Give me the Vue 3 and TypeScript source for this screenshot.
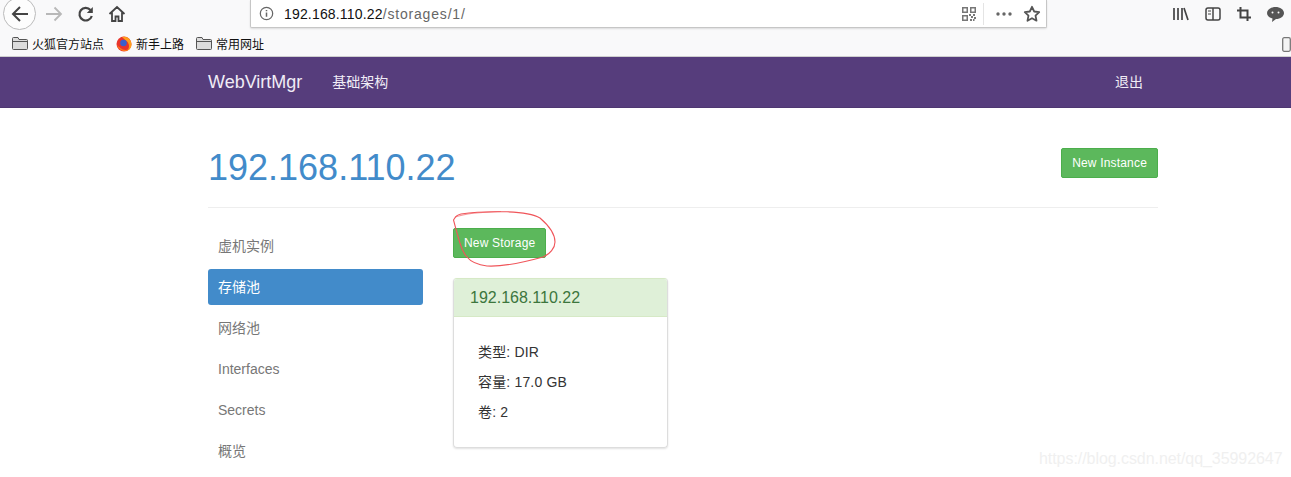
<script setup lang="ts">
const sideItems = [
  { label: "虚机实例", active: false },
  { label: "存储池", active: true },
  { label: "网络池", active: false },
  { label: "Interfaces", active: false },
  { label: "Secrets", active: false },
  { label: "概览", active: false },
];

const details = ["类型: DIR", "容量: 17.0 GB", "卷: 2"];
</script>

<template>
  <div class="page">
    <div class="chrome">
      <div class="toolbar">
        <div class="nav-buttons">
          <span class="back">
            <svg width="20" height="20" viewBox="0 0 20 20" fill="none" stroke="#444" stroke-width="2">
              <path d="M18 10H3M10 3l-7 7 7 7" />
            </svg>
          </span>
          <svg class="forward" width="18" height="18" viewBox="0 0 18 18" fill="none" stroke="#b8b8b8" stroke-width="1.8">
            <path d="M1 9h15M9.500 2.500 16 9l-6.500 6.500" />
          </svg>
          <svg class="reload" width="18" height="18" viewBox="0 0 18 18" fill="none" stroke="#444" stroke-width="2.200">
            <path d="M14.800 11a6.300 6.300 0 1 1-1.300-6" />
            <path d="M15.800 2v6h-6z" fill="#444" stroke="none" />
          </svg>
          <svg class="home" width="18" height="18" viewBox="0 0 18 18" fill="none" stroke="#444" stroke-width="1.800">
            <path d="M1.500 9 9 2l7.500 7M4 7.500V16h3.500v-4.500h3V16H14V7.500" />
          </svg>
        </div>
        <div class="urlbar">
          <svg class="info" width="15" height="15" viewBox="0 0 16 16" fill="none" stroke="#666" stroke-width="1.300">
            <circle cx="8" cy="8" r="6.600" />
            <path d="M8 7v4.500M8 4.200v1.400" stroke-width="1.600" />
          </svg>
          <span class="url"><span class="host">192.168.110.22</span><span class="path">/storages/1/</span></span>
          <svg class="qr" width="14" height="14" viewBox="0 0 14 14" fill="#777">
            <path d="M0 0h6v6H0zm1.500 1.500v3h3v-3zM8 0h6v6H8zm1.500 1.500v3h3v-3zM0 8h6v6H0zm1.500 1.500v3h3v-3z" fill-rule="evenodd" />
            <path d="M7 7h2v2H7zM11 7h2v2h-2zM9 9h2v2H9zM12 10h2v2h-2zM8 12h2v2H8zM11 12h1.500v2H11z" />
          </svg>
          <span class="url-sep"></span>
          <svg class="dots" width="16" height="4" viewBox="0 0 16 4" fill="#666">
            <circle cx="2" cy="2" r="1.700" />
            <circle cx="8" cy="2" r="1.700" />
            <circle cx="14" cy="2" r="1.700" />
          </svg>
          <svg class="star" width="18" height="18" viewBox="0 0 18 18" fill="none" stroke="#555" stroke-width="1.800" stroke-linejoin="round">
            <path d="m9 1.800 2.200 4.700 5 .6-3.700 3.500 1 5.100L9 13.200l-4.500 2.500 1-5.100L1.800 7.100l5-.6z" />
          </svg>
        </div>
        <div class="tools">
          <svg width="16" height="14" viewBox="0 0 16 14" fill="none" stroke="#444" stroke-width="1.700">
            <path d="M1 1v12M5 1v12M9 1v12M11 1l4 12" />
          </svg>
          <svg width="16" height="14" viewBox="0 0 16 14" fill="none" stroke="#444" stroke-width="1.500">
            <rect x="1" y="1" width="14" height="12" rx="2" />
            <path d="M8 1v12" />
            <path d="M3 4h3M3 7h3" stroke-width="1" />
          </svg>
          <svg width="14" height="14" viewBox="0 0 14 14" fill="none" stroke="#444" stroke-width="2">
            <path d="M3.500 0v10.500H14M0 3.500h10.500V14" />
          </svg>
          <svg width="17" height="15" viewBox="0 0 17 15" fill="#555">
            <path d="M8.500 0C13 0 17 2.600 17 6s-3.500 6-8 6l-4 3 .5-3.500C2 10.500 0 8.500 0 6 0 2.600 4 0 8.500 0z" />
            <circle cx="5.500" cy="5.500" r="1" fill="#f9f9fa" />
            <circle cx="11.500" cy="5.500" r="1" fill="#f9f9fa" />
          </svg>
        </div>
      </div>
      <div class="bookmarks">
        <span class="bookmark">
          <svg class="folder" width="16" height="13" viewBox="0 0 16 13" fill="#dcdcdc" stroke="#555">
            <path d="M.500 2V11.500a1 1 0 0 0 1 1h13a1 1 0 0 0 1-1V3.500a1 1 0 0 0-1-1H7L6 .500H1.500a1 1 0 0 0-1 1z" />
            <path d="M.500 4.500h15" fill="none" />
          </svg>
          火狐官方站点
        </span>
        <span class="bookmark">
          <svg class="firefox" width="16" height="16" viewBox="0 0 16 16">
            <circle cx="8" cy="8" r="7.500" fill="#e8352c" />
            <path d="M6 1c5-1.500 9.500 2.500 9.500 7.500 0 3.500-2.500 6-5.500 6.700 2.500-1.500 3.500-4 2.700-7C12 5.500 9 4 6 1z" fill="#ff9f1c" />
            <path d="M1 9c1 3.500 4 6 7.500 6 1.500 0 3-.5 4-1.500-3 1-6 .5-8-1.500-1.500-1-2.500-2-3.500-3z" fill="#ff7a1c" />
            <circle cx="7.500" cy="7" r="3.300" fill="#3a5fcd" />
          </svg>
          新手上路
        </span>
        <span class="bookmark">
          <svg class="folder" width="16" height="13" viewBox="0 0 16 13" fill="#dcdcdc" stroke="#555">
            <path d="M.500 2V11.500a1 1 0 0 0 1 1h13a1 1 0 0 0 1-1V3.500a1 1 0 0 0-1-1H7L6 .500H1.500a1 1 0 0 0-1 1z" />
            <path d="M.500 4.500h15" fill="none" />
          </svg>
          常用网址
        </span>
        <svg class="device" width="9" height="15" viewBox="0 0 9 15" fill="#f4f4f4" stroke="#777" stroke-width="1.300">
          <rect x=".7" y=".7" width="7.600" height="13.600" rx="1.500" />
        </svg>
      </div>
    </div>

    <nav class="navbar">
      <div class="container nav-inner">
        <span class="brand">WebVirtMgr</span>
        <span class="nav-link">基础架构</span>
        <span class="nav-link logout">退出</span>
      </div>
    </nav>

    <main class="container">
      <header class="page-header">
        <h1>192.168.110.22</h1>
        <button class="btn" type="button">New Instance</button>
      </header>
      <div class="columns">
        <ul class="side-nav">
          <li v-for="item in sideItems" :key="item.label" :class="{ active: item.active }">{{ item.label }}</li>
        </ul>
        <section class="content">
          <div class="storage-action">
            <button class="btn" type="button">New Storage</button>
            <svg class="scribble" width="106" height="58" viewBox="0 0 106 58" fill="none" stroke="#f0555a" stroke-width="1.100">
              <path d="M.5 9C3 5 4 4 8 3 24 .5 40 .5 54 .8c14 .4 26 2 33 6.200 7 6 15 15 15 24 0 6-5 12-12 15-18 5-38 10-56 9-8-1-16-4-20-9C9 41 6 30 .5 9z" />
              <path d="M2 6C14 2 30 1 48 .5" stroke-opacity=".6" />
            </svg>
          </div>
          <article class="panel">
            <div class="panel-heading">192.168.110.22</div>
            <div class="panel-body">
              <p v-for="line in details" :key="line">{{ line }}</p>
            </div>
          </article>
        </section>
      </div>
    </main>
    <span class="watermark">https://blog.csdn.net/qq_35992647</span>
  </div>
</template>

<style scoped>
.page {
  position: relative;
  width: 1291px;
  height: 477px;
  overflow: hidden;
  background: #fff;
  color: #333;
  font-family: "Liberation Sans", "Noto Sans CJK SC", sans-serif;
  font-size: 14px;
}

.chrome {
  height: 57px;
  background: #f9f9fa;
  box-sizing: border-box;
  border-bottom: 1px solid #cfcfcf;
}

.toolbar {
  display: flex;
  align-items: flex-start;
  height: 31px;
}

.nav-buttons {
  display: flex;
  align-items: center;
  width: 250px;
  height: 28px;
  box-sizing: border-box;
  padding-left: 3px;
}

.back {
  display: flex;
  align-items: center;
  justify-content: center;
  width: 33px;
  height: 33px;
  margin-top: -1px;
  border: 1px solid #bbb;
  border-radius: 50%;
  box-sizing: border-box;
  background: #fdfdfd;
  flex: none;
}

.forward {
  margin-left: 9px;
}

.reload {
  margin-left: 14px;
}

.home {
  margin-left: 13px;
}

.urlbar {
  display: flex;
  align-items: center;
  width: 797px;
  height: 28px;
  box-sizing: border-box;
  background: #fff;
  border: 1px solid #c6c6c6;
  border-top: none;
  border-radius: 0 0 2px 2px;
  box-shadow: 0 1px 2px rgba(0, 0, 0, 0.12);
  padding: 0 5px 0 8px;
}

.url {
  margin-left: 10px;
  font-size: 14px;
  letter-spacing: 0.17px;
  color: #111;
  flex: 1;
}

.path {
  color: #666;
  letter-spacing: 0.82px;
}

.url-sep {
  width: 1px;
  height: 22px;
  margin: 0 12px 0 7px;
  background: #e4e4e4;
}

.star {
  margin-left: 11px;
}

.tools {
  display: flex;
  align-items: center;
  gap: 16px;
  height: 28px;
  margin-left: 126px;
}

.bookmarks {
  display: flex;
  align-items: center;
  height: 25px;
  font-size: 12px;
  color: #111;
  padding-left: 12px;
}

.bookmark {
  display: flex;
  align-items: center;
  gap: 4px;
  margin-right: 12px;
}

.device {
  margin-left: auto;
  margin-top: 1px;
}

.navbar {
  height: 51px;
  background: #563d7c;
  box-sizing: border-box;
  border-bottom: 1px solid #4e3771;
}

.container {
  width: 950px;
  margin-left: 208px;
}

.nav-inner {
  display: flex;
  align-items: center;
  height: 50px;
  color: #f0ecf6;
}

.brand {
  font-size: 18px;
}

.nav-link {
  margin-left: 30px;
  padding-bottom: 2px;
}

.logout {
  margin-left: auto;
  margin-right: 15px;
}

.page-header {
  display: flex;
  justify-content: space-between;
  height: 100px;
  box-sizing: border-box;
  padding-top: 40px;
  border-bottom: 1px solid #eee;
}

h1 {
  margin: 0;
  font-size: 36px;
  line-height: 39px;
  font-weight: 400;
  color: #428bca;
}

.btn {
  height: 30px;
  padding: 0 10px;
  font: 12px "Liberation Sans", "Noto Sans CJK SC", sans-serif;
  letter-spacing: 0.18px;
  color: #fff;
  background: #5cb85c;
  border: 1px solid #4cae4c;
  border-radius: 2px;
}

.columns {
  display: flex;
  margin-top: 20px;
}

.side-nav {
  width: 215px;
  margin: 0 30px 0 0;
  padding: 0;
  list-style: none;
  display: flex;
  flex-direction: column;
  gap: 5px;
}

.side-nav li {
  height: 36px;
  line-height: 36px;
  padding-left: 10px;
  color: #777;
  border-radius: 3px;
}

.side-nav li.active {
  background: #428bca;
  color: #fff;
}

.storage-action {
  position: relative;
  height: 50px;
}

.scribble {
  position: absolute;
  left: 0;
  top: -17px;
}

.panel {
  width: 215px;
  height: 170px;
  box-sizing: border-box;
  border: 1px solid #d6e9c6;
  border-radius: 4px;
  box-shadow: 0 1px 2px rgba(0, 0, 0, 0.12);
  border-color: #d6e9c6 #ddd #ddd;
}

.panel-heading {
  height: 38px;
  line-height: 37px;
  box-sizing: border-box;
  padding-left: 16px;
  font-size: 16px;
  color: #3c763d;
  background: #dff0d8;
  border-bottom: 1px solid #d6e9c6;
  border-radius: 3px 3px 0 0;
}

.panel-body {
  padding: 25px 24px 20px;
}

.panel-body p {
  margin: 0 0 10px;
  line-height: 20px;
  letter-spacing: 0.17px;
}

.watermark {
  position: absolute;
  left: 1039px;
  top: 450px;
  font-size: 16px;
  letter-spacing: -0.06px;
  color: #f0f0f0;
}
</style>
